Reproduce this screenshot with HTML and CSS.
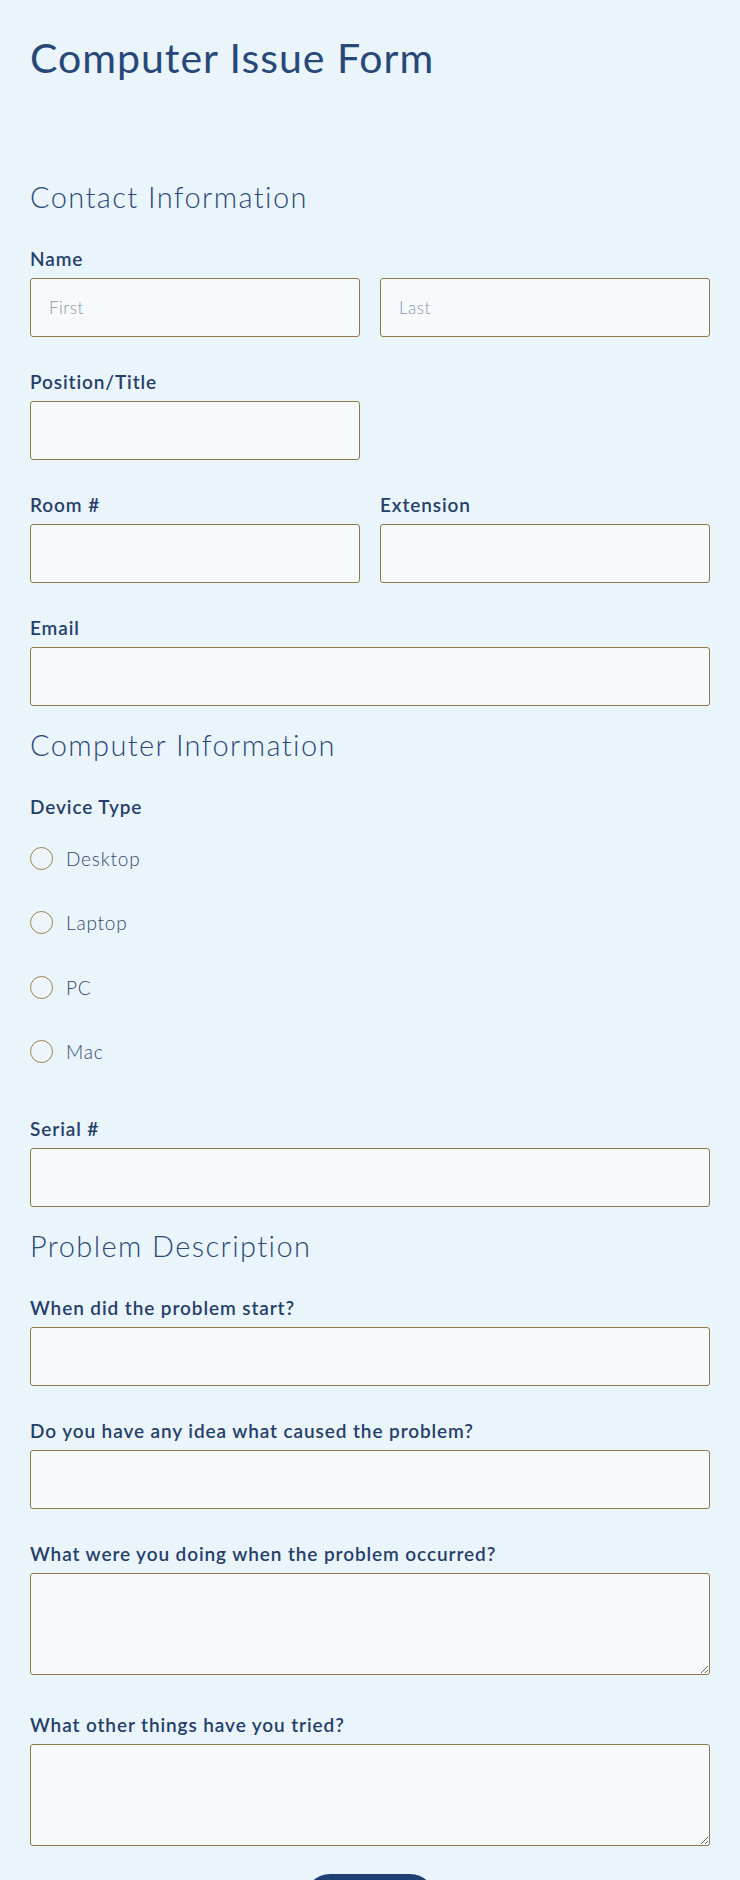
FILE: index.html
```html
<!DOCTYPE html>
<html lang="en">
<head>
<meta charset="utf-8">
<title>Computer Issue Form</title>
<link rel="stylesheet" href="styles.css">
</head>
<body>
<main class="page">
  <h1 class="form-title">Computer Issue Form</h1>

  <section class="section section-first">
    <h2 class="section-title">Contact Information</h2>

    <div class="field">
      <label class="label">Name</label>
      <div class="grid-2">
        <input class="input" type="text" placeholder="First">
        <input class="input" type="text" placeholder="Last">
      </div>
    </div>

    <div class="field">
      <label class="label">Position/Title</label>
      <div class="grid-2">
        <input class="input" type="text">
      </div>
    </div>

    <div class="field grid-2">
      <div>
        <label class="label">Room #</label>
        <input class="input" type="text">
      </div>
      <div>
        <label class="label">Extension</label>
        <input class="input" type="text">
      </div>
    </div>

    <div class="field">
      <label class="label">Email</label>
      <input class="input" type="email">
    </div>
  </section>

  <section class="section">
    <h2 class="section-title">Computer Information</h2>

    <div class="field">
      <span class="label">Device Type</span>
      <div class="radio-list">
        <label class="radio-option"><span class="radio"></span>Desktop</label>
        <label class="radio-option"><span class="radio"></span>Laptop</label>
        <label class="radio-option"><span class="radio"></span>PC</label>
        <label class="radio-option"><span class="radio"></span>Mac</label>
      </div>
    </div>

    <div class="field">
      <label class="label">Serial #</label>
      <input class="input" type="text">
    </div>
  </section>

  <section class="section">
    <h2 class="section-title">Problem Description</h2>

    <div class="field">
      <label class="label">When did the problem start?</label>
      <input class="input" type="text">
    </div>

    <div class="field">
      <label class="label">Do you have any idea what caused the problem?</label>
      <input class="input" type="text">
    </div>

    <div class="field">
      <label class="label">What were you doing when the problem occurred?</label>
      <textarea class="input textarea"></textarea>
    </div>

    <div class="field">
      <label class="label">What other things have you tried?</label>
      <textarea class="input textarea"></textarea>
    </div>
  </section>

  <div class="actions">
    <button class="submit" type="button">Submit</button>
  </div>
</main>
</body>
</html>
```

FILE: styles.css
```css
* {
  box-sizing: border-box;
}

html, body {
  margin: 0;
  padding: 0;
  background: #e9f4fb;
}

body {
  font-family: "Lato", "Open Sans", sans-serif;
  color: #263f6a;
}

.page {
  padding: 34px 30px 40px;
}

.form-title {
  margin: 0;
  font-size: 41px;
  line-height: 48px;
  font-weight: 400;
  color: #284878;
  letter-spacing: 1px;
}

.section-first {
  margin-top: 98px;
}

.section-title {
  margin: 22px 0 0;
  font-size: 29px;
  line-height: 34px;
  font-weight: 300;
  color: #2b4a78;
  letter-spacing: 1.4px;
}

.section-first .section-title {
  margin-top: 0;
}

.field {
  display: flex;
  flex-direction: column;
  margin-top: 34px;
}

.label {
  display: block;
  font-size: 19px;
  line-height: 22px;
  font-weight: 600;
  color: #263f6a;
  letter-spacing: 0.9px;
  margin-bottom: 8px;
}

.grid-2 {
  display: grid;
  grid-template-columns: 1fr 1fr;
  column-gap: 20px;
}

.input {
  display: block;
  width: 100%;
  height: 59px;
  margin: 0;
  padding: 0 18px;
  border: 1px solid #8c7a48;
  border-radius: 3px;
  background: #f6fafd;
  font-family: "Lato", "Open Sans", sans-serif;
  font-size: 17px;
  font-weight: 300;
  letter-spacing: 0.5px;
  color: #263f6a;
  outline: none;
}

.input::placeholder {
  color: #8b95aa;
}

.textarea {
  height: 102px;
  padding: 12px 18px;
  margin-bottom: 5px;
  resize: vertical;
}

.radio-list {
  margin-top: 0;
}

.radio-option {
  display: flex;
  align-items: center;
  gap: 13px;
  height: 64.5px;
  font-size: 19px;
  font-weight: 300;
  letter-spacing: 0.8px;
  color: #34496f;
}

.radio {
  width: 23px;
  height: 23px;
  flex: none;
  border: 1px solid #9a8450;
  border-radius: 50%;
  background: #eef6fb;
}

.actions {
  display: flex;
  justify-content: center;
  margin-top: 23px;
}

.submit {
  width: 132px;
  height: 52px;
  border: none;
  border-radius: 26px;
  background: #1f4075;
  color: #ffffff;
  font-family: "Lato", "Open Sans", sans-serif;
  font-size: 18px;
  font-weight: 600;
}
```
